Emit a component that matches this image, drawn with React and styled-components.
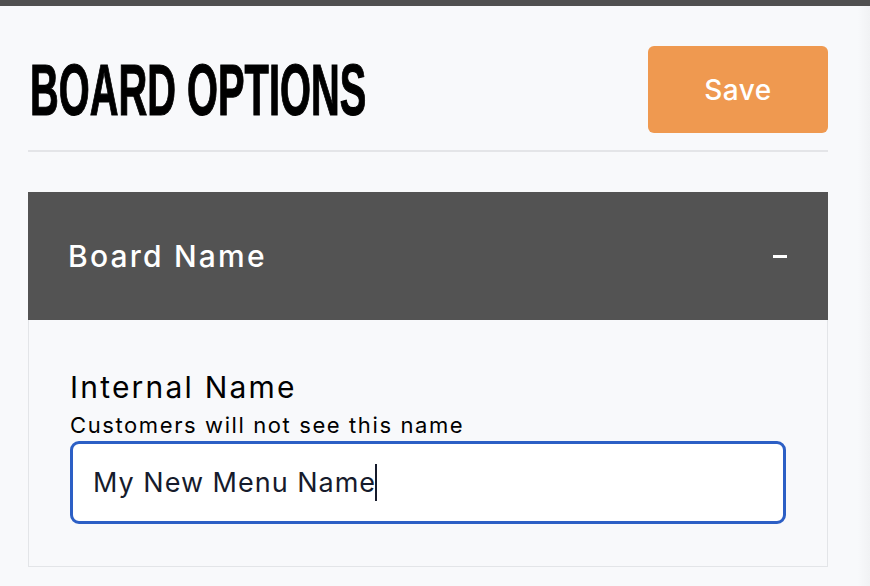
import styled, { createGlobalStyle } from "styled-components";

const GlobalStyle = createGlobalStyle`
  html, body {
    margin: 0;
    padding: 0;
  }
  body {
    background: linear-gradient(to right, #f8f9fb 98.6%, #f1f2f4);
    font-family: "Inter", "Noto Sans", sans-serif;
    min-height: 586px;
  }
`;

const TopBar = styled.div`
  height: 6px;
  background: #505050;
`;

const Page = styled.main`
  width: 800px;
  padding: 40px 0 0 28px;
`;

const HeaderRow = styled.div`
  display: flex;
  justify-content: space-between;
  align-items: center;
  padding-bottom: 17px;
  border-bottom: 2px solid #e4e5e8;
  margin-bottom: 40px;
`;

const Title = styled.h1`
  margin: 0 0 0 2px;
  font-family: "Liberation Sans", "Arial", sans-serif;
  font-weight: 700;
  font-size: 72px;
  line-height: 1;
  color: #000;
  white-space: nowrap;
  transform: scaleX(0.553);
  transform-origin: left center;
  -webkit-text-stroke: 1.2px #000;
`;

const SaveButton = styled.button`
  width: 180px;
  height: 87px;
  border: none;
  border-radius: 6px;
  background: #ef9950;
  color: #fff;
  font-family: inherit;
  font-size: 28px;
  font-weight: 500;
  letter-spacing: 0.5px;
  cursor: pointer;
`;

const Section = styled.section`
  display: flex;
  flex-direction: column;
`;

const SectionHead = styled.div`
  height: 128px;
  display: flex;
  align-items: center;
  justify-content: space-between;
  padding: 0 40px;
  background: #535353;
  color: #fff;
  font-size: 30px;
  font-weight: 500;
  letter-spacing: 2.2px;
`;

const Toggle = styled.span`
  width: 14px;
  height: 3px;
  background: #fff;
  margin-right: 1px;
`;

const SectionBody = styled.div`
  border: 1px solid #e3e5e8;
  border-top: none;
  padding: 45px 41px 42px;
  display: flex;
  flex-direction: column;
`;

const Label = styled.label`
  font-size: 30px;
  line-height: 44px;
  letter-spacing: 2.2px;
  color: #000;
`;

const Hint = styled.span`
  font-size: 22px;
  line-height: 32px;
  letter-spacing: 1.6px;
  color: #000;
`;

const TextInput = styled.div`
  height: 77px;
  border: 3px solid #2c5fc5;
  border-radius: 9px;
  background: #fff;
  display: flex;
  align-items: center;
  padding: 0 20px;
  font-size: 27px;
  letter-spacing: 1px;
  color: #161b2c;
`;

const Caret = styled.span`
  width: 2px;
  height: 37px;
  background: #161b2c;
  margin-left: -1px;
`;

export default function App() {
  return (
    <>
      <GlobalStyle />
      <TopBar />
      <Page>
        <HeaderRow>
          <Title>BOARD OPTIONS</Title>
          <SaveButton>Save</SaveButton>
        </HeaderRow>
        <Section>
          <SectionHead>
            <span>Board Name</span>
            <Toggle />
          </SectionHead>
          <SectionBody>
            <Label>Internal Name</Label>
            <Hint>Customers will not see this name</Hint>
            <TextInput>
              My New Menu Name
              <Caret />
            </TextInput>
          </SectionBody>
        </Section>
      </Page>
    </>
  );
}
